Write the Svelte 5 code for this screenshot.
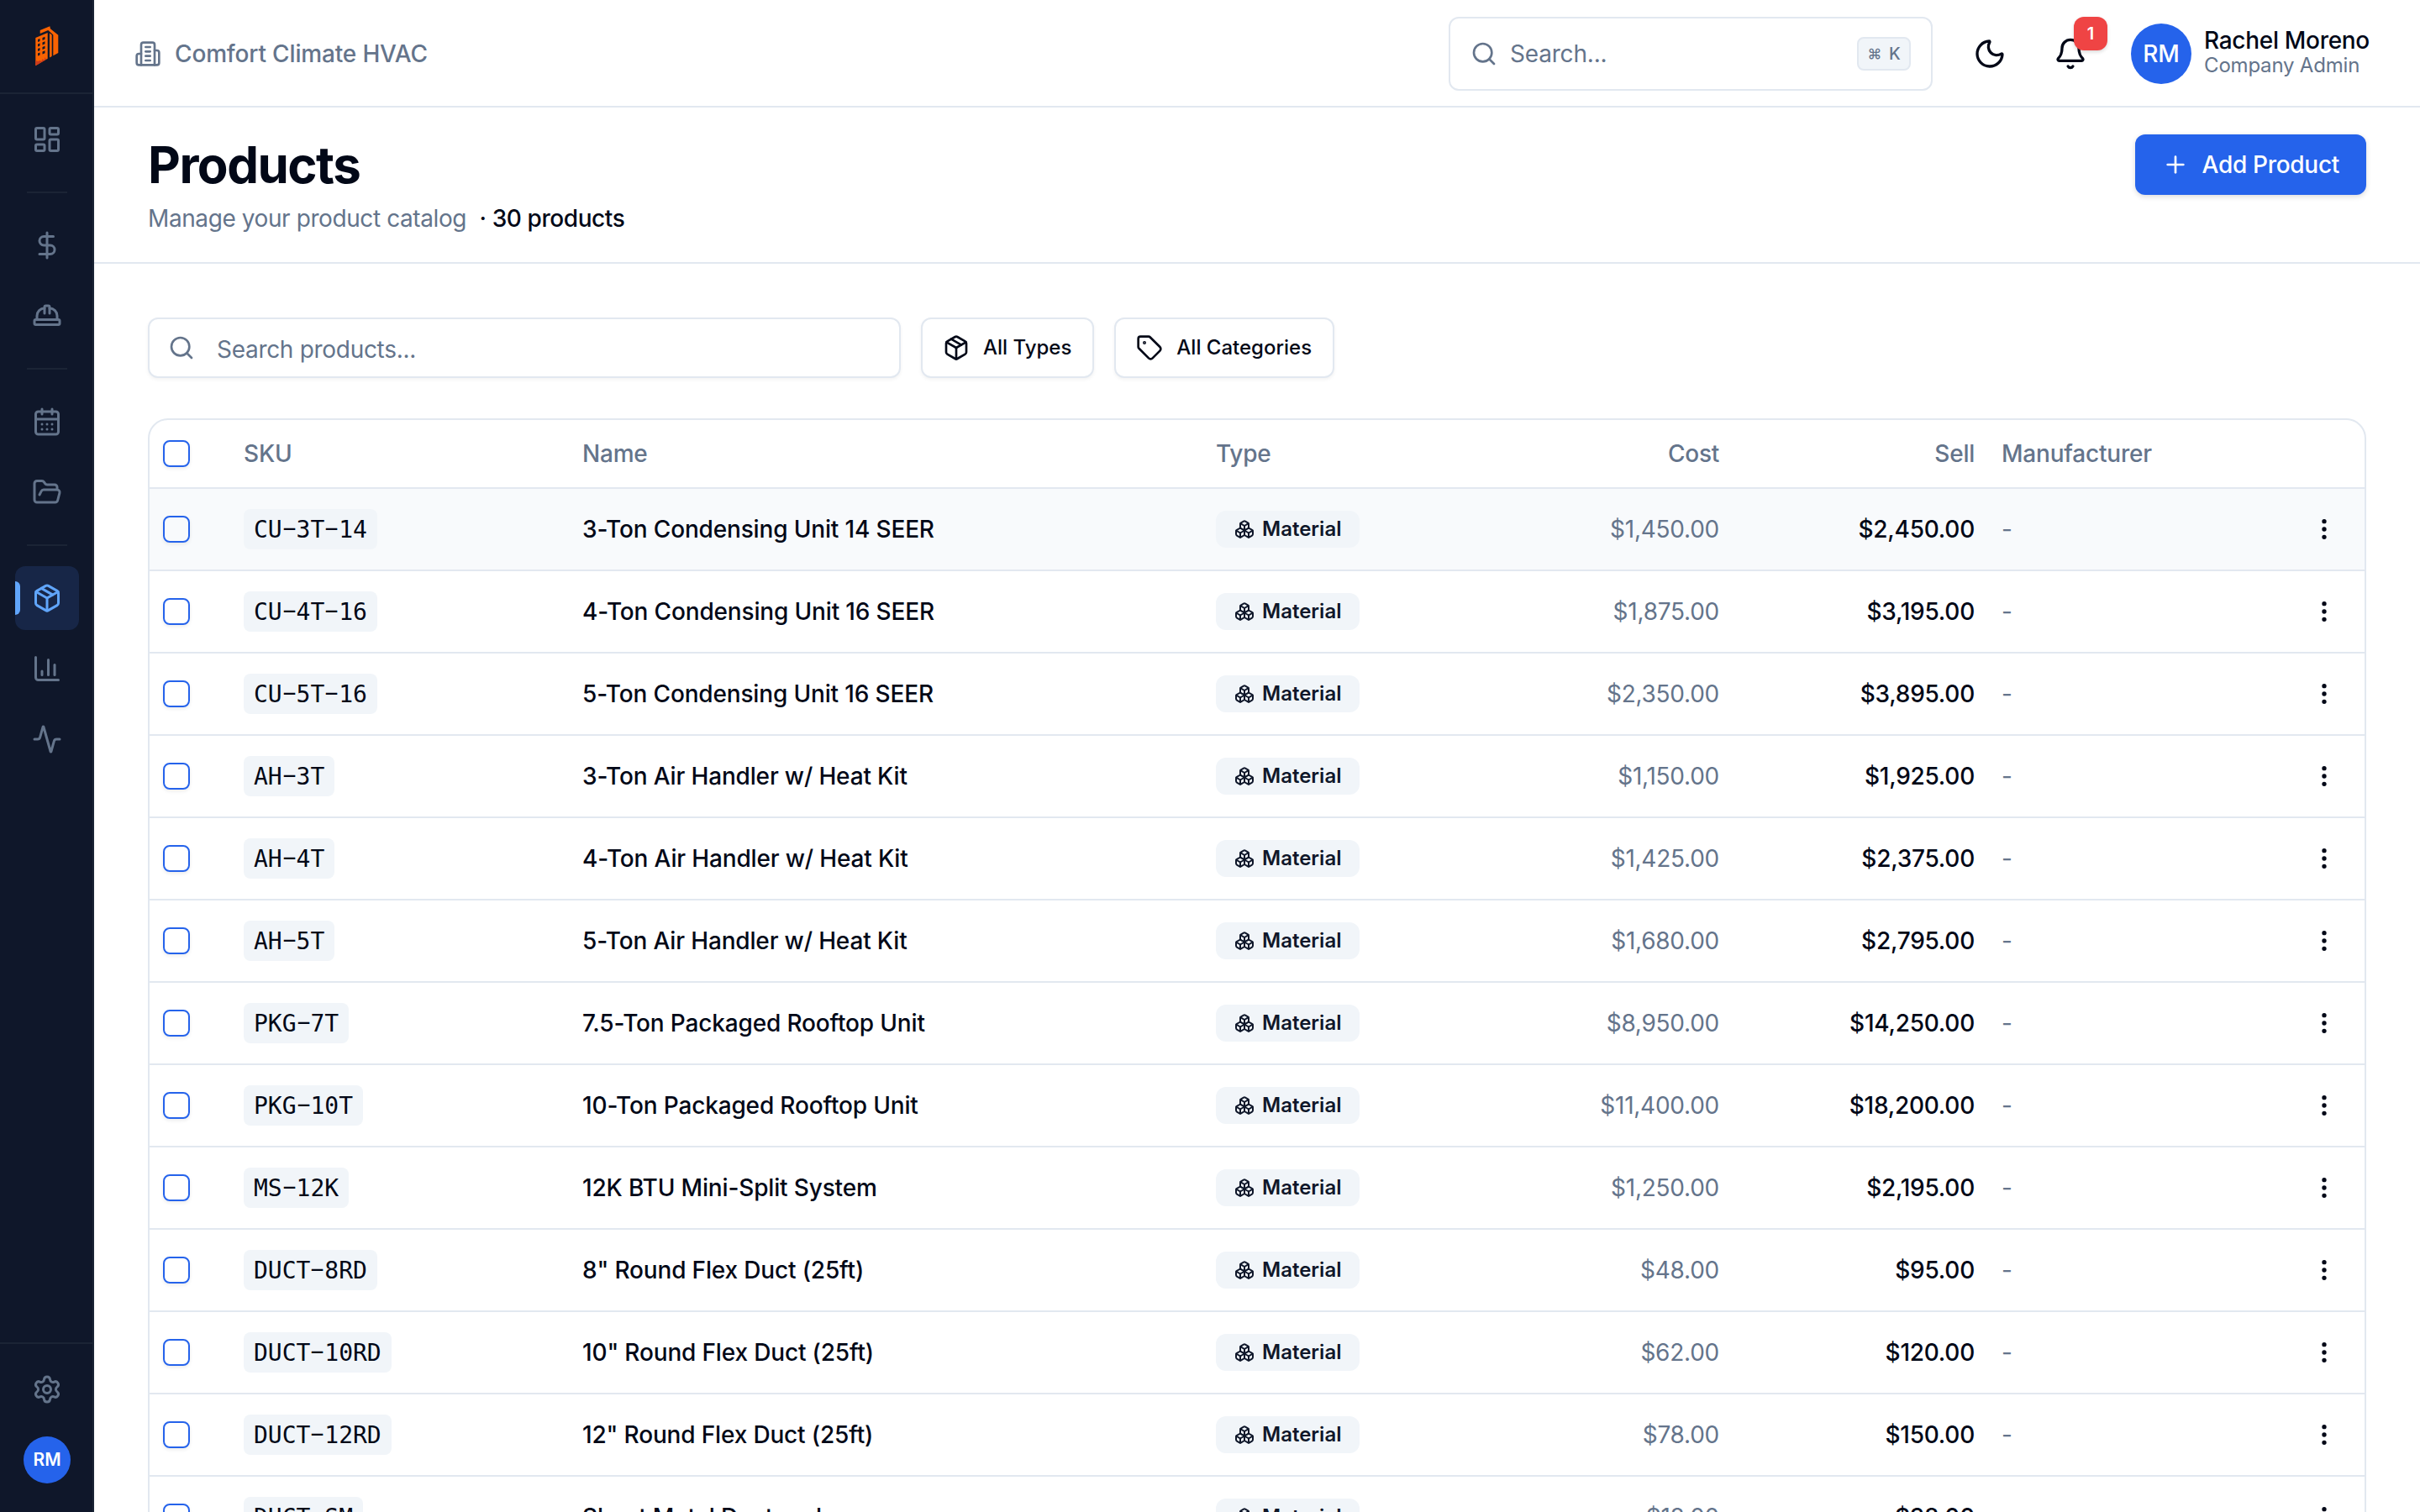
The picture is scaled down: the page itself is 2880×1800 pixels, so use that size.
<script lang="ts">
  type Product = {
    sku: string;
    name: string;
    cost: string;
    sell: string;
  };

  type IconName = keyof typeof icons;

  // 24x24 stroke icons, keyed by name
  const icons = {
    dashboard:
      '<rect width="7" height="9" x="3" y="3" rx="1"/><rect width="7" height="5" x="14" y="3" rx="1"/><rect width="7" height="9" x="14" y="12" rx="1"/><rect width="7" height="5" x="3" y="16" rx="1"/>',
    dollar:
      '<line x1="12" x2="12" y1="2" y2="22"/><path d="M17 5H9.5a3.5 3.5 0 0 0 0 7h5a3.5 3.5 0 0 1 0 7H6"/>',
    hardHat:
      '<path d="M10 10V5a1 1 0 0 1 1-1h2a1 1 0 0 1 1 1v5"/><path d="M14 6a6 6 0 0 1 6 6v3"/><path d="M4 15v-3a6 6 0 0 1 6-6"/><rect x="2" y="15" width="20" height="4" rx="1"/>',
    calendar:
      '<path d="M8 2v4"/><path d="M16 2v4"/><rect width="18" height="18" x="3" y="4" rx="2"/><path d="M3 10h18"/><path d="M8 14h.01"/><path d="M12 14h.01"/><path d="M16 14h.01"/><path d="M8 18h.01"/><path d="M12 18h.01"/><path d="M16 18h.01"/>',
    folder:
      '<path d="m6 14 1.5-2.9A2 2 0 0 1 9.24 10H20a2 2 0 0 1 1.94 2.5l-1.54 6a2 2 0 0 1-1.95 1.5H4a2 2 0 0 1-2-2V5a2 2 0 0 1 2-2h3.9a2 2 0 0 1 1.69.9l.81 1.2a2 2 0 0 0 1.67.9H18a2 2 0 0 1 2 2v2"/>',
    package:
      '<path d="M11 21.73a2 2 0 0 0 2 0l7-4A2 2 0 0 0 21 16V8a2 2 0 0 0-1-1.73l-7-4a2 2 0 0 0-2 0l-7 4A2 2 0 0 0 3 8v8a2 2 0 0 0 1 1.73z"/><path d="M12 22V12"/><path d="M3.29 7 12 12l8.71-5"/><path d="m7.5 4.27 9 5.15"/>',
    chart:
      '<path d="M3 3v16a2 2 0 0 0 2 2h16"/><path d="M13 17V5"/><path d="M18 17V9"/><path d="M8 17v-3"/>',
    activity:
      '<path d="M22 12h-2.48a2 2 0 0 0-1.93 1.46l-2.35 8.36a.25.25 0 0 1-.48 0L9.24 2.18a.25.25 0 0 0-.48 0l-2.35 8.36A2 2 0 0 1 4.49 12H2"/>',
    settings:
      '<path d="M9.671 4.136a2.34 2.34 0 0 1 4.659 0 2.34 2.34 0 0 0 3.319 1.915 2.34 2.34 0 0 1 2.33 4.033 2.34 2.34 0 0 0 0 3.831 2.34 2.34 0 0 1-2.33 4.033 2.34 2.34 0 0 0-3.319 1.915 2.34 2.34 0 0 1-4.659 0 2.34 2.34 0 0 0-3.32-1.915 2.34 2.34 0 0 1-2.33-4.033 2.34 2.34 0 0 0 0-3.831A2.34 2.34 0 0 1 6.35 6.051a2.34 2.34 0 0 0 3.319-1.915"/><circle cx="12" cy="12" r="3"/>',
    building:
      '<path d="M6 22V4a2 2 0 0 1 2-2h8a2 2 0 0 1 2 2v18Z"/><path d="M6 12H4a2 2 0 0 0-2 2v6a2 2 0 0 0 2 2h2"/><path d="M18 9h2a2 2 0 0 1 2 2v9a2 2 0 0 1-2 2h-2"/><path d="M10 6h4"/><path d="M10 10h4"/><path d="M10 14h4"/><path d="M10 18h4"/>',
    search: '<circle cx="11" cy="11" r="8"/><path d="m21 21-4.3-4.3"/>',
    moon: '<path d="M20.985 12.486a9 9 0 1 1-9.473-9.472c.405-.022.617.46.402.803a6 6 0 0 0 8.268 8.268c.344-.215.825-.004.803.401"/>',
    bell: '<path d="M10.268 21a2 2 0 0 0 3.464 0"/><path d="M3.262 15.326A1 1 0 0 0 4 17h16a1 1 0 0 0 .74-1.673C19.41 13.956 18 12.499 18 8A6 6 0 0 0 6 8c0 4.499-1.411 5.956-2.738 7.326"/>',
    plus: '<path d="M5 12h14"/><path d="M12 5v14"/>',
    tag: '<path d="M12.586 2.586A2 2 0 0 0 11.172 2H4a2 2 0 0 0-2 2v7.172a2 2 0 0 0 .586 1.414l8.704 8.704a2.426 2.426 0 0 0 3.42 0l6.58-6.58a2.426 2.426 0 0 0 0-3.42z"/><circle cx="7.5" cy="7.5" r=".5" fill="currentColor"/>',
    boxes:
      '<path d="M2.97 12.92A2 2 0 0 0 2 14.63v3.24a2 2 0 0 0 .97 1.71l3 1.8a2 2 0 0 0 2.06 0L12 19v-5.5l-5-3-4.03 2.42Z"/><path d="m7 16.5-4.74-2.85"/><path d="m7 16.5 5-3"/><path d="M7 16.5v5.17"/><path d="M12 13.5V19l3.97 2.38a2 2 0 0 0 2.06 0l3-1.8a2 2 0 0 0 .97-1.71v-3.24a2 2 0 0 0-.97-1.71L17 10.5l-5 3Z"/><path d="m17 16.5-5-3"/><path d="m17 16.5 4.74-2.85"/><path d="M17 16.5v5.17"/><path d="M7.97 4.42A2 2 0 0 0 7 6.13v4.37l5 3 5-3V6.13a2 2 0 0 0-.97-1.71l-3-1.8a2 2 0 0 0-2.06 0l-3 1.8Z"/><path d="M12 8 7.26 5.15"/><path d="m12 8 4.74-2.85"/><path d="M12 13.5V8"/>',
    more: '<circle cx="12" cy="12" r="1"/><circle cx="12" cy="5" r="1"/><circle cx="12" cy="19" r="1"/>',
  };

  const navGroups: { icon: IconName; label: string }[][] = [
    [{ icon: "dashboard", label: "Dashboard" }],
    [
      { icon: "dollar", label: "Sales" },
      { icon: "hardHat", label: "Jobs" },
    ],
    [
      { icon: "calendar", label: "Schedule" },
      { icon: "folder", label: "Projects" },
    ],
    [
      { icon: "package", label: "Products" },
      { icon: "chart", label: "Reports" },
      { icon: "activity", label: "Activity" },
    ],
  ];

  const products: Product[] = [
    { sku: "CU-3T-14", name: "3-Ton Condensing Unit 14 SEER", cost: "$1,450.00", sell: "$2,450.00" },
    { sku: "CU-4T-16", name: "4-Ton Condensing Unit 16 SEER", cost: "$1,875.00", sell: "$3,195.00" },
    { sku: "CU-5T-16", name: "5-Ton Condensing Unit 16 SEER", cost: "$2,350.00", sell: "$3,895.00" },
    { sku: "AH-3T", name: "3-Ton Air Handler w/ Heat Kit", cost: "$1,150.00", sell: "$1,925.00" },
    { sku: "AH-4T", name: "4-Ton Air Handler w/ Heat Kit", cost: "$1,425.00", sell: "$2,375.00" },
    { sku: "AH-5T", name: "5-Ton Air Handler w/ Heat Kit", cost: "$1,680.00", sell: "$2,795.00" },
    { sku: "PKG-7T", name: "7.5-Ton Packaged Rooftop Unit", cost: "$8,950.00", sell: "$14,250.00" },
    { sku: "PKG-10T", name: "10-Ton Packaged Rooftop Unit", cost: "$11,400.00", sell: "$18,200.00" },
    { sku: "MS-12K", name: "12K BTU Mini-Split System", cost: "$1,250.00", sell: "$2,195.00" },
    { sku: "DUCT-8RD", name: '8" Round Flex Duct (25ft)', cost: "$48.00", sell: "$95.00" },
    { sku: "DUCT-10RD", name: '10" Round Flex Duct (25ft)', cost: "$62.00", sell: "$120.00" },
    { sku: "DUCT-12RD", name: '12" Round Flex Duct (25ft)', cost: "$78.00", sell: "$150.00" },
    { sku: "DUCT-SM", name: "Sheet Metal Ductwork", cost: "$18.00", sell: "$38.00" },
  ];

  let activeNav = $state("Products");
  let highlighted = $state("CU-3T-14");
</script>

{#snippet icon(name: IconName, size: number, stroke = 2)}
  <svg
    class="icon"
    width={size}
    height={size}
    viewBox="0 0 24 24"
    fill="none"
    stroke="currentColor"
    stroke-width={stroke}
    stroke-linecap="round"
    stroke-linejoin="round"
    aria-hidden="true"
  >
    {@html icons[name]}
  </svg>
{/snippet}

<div class="app">
  <aside class="sidebar">
    <div class="brand">
      <svg width="28" height="48" viewBox="0 0 28 48" aria-hidden="true">
        <path fill="#f96302" d="M.3 14 14.700 8v30.700L.3 47.300Z" />
        <path fill="#f96302" d="M5.700 5 17.300.3l.7 3 9.300 7.400V32l-6 3.300V10.500L15.300 5 5.700 9Z" />
        <path fill="#f96302" d="M17 8.500l2.700 2V36L17 37.500Z" />
        <path fill="#cb3a1c" d="M.3 41l3 1 2-1 2 1 1.500-3 1.500 2 1.500-4 1 3 1.900-1v-.3L.3 47.300Z" />
        <path
          fill="#0f172a"
          d="M3 16l2.500-1v3L3 19ZM8.500 14l3-1.200v3l-3 1.200ZM3 21.500l2.500-1v3l-2.500 1ZM8.500 19.500l3-1.200v3l-3 1.200ZM3 27l2.500-1v3L3 30ZM8.500 25l3-1.200v3l-3 1.200ZM3 32.500l2.500-1v3l-2.500 1ZM8.500 30.500l3-1.200v3l-3 1.200Z"
        />
      </svg>
    </div>
    <nav class="nav">
      {#each navGroups as group, i}
        {#if i > 0}
          <div class="divider"></div>
        {/if}
        <div class="nav-group">
          {#each group as item}
            <button
              class="nav-item"
              class:active={activeNav === item.label}
              aria-label={item.label}
              onclick={() => (activeNav = item.label)}
            >
              {@render icon(item.icon, 36)}
            </button>
          {/each}
        </div>
      {/each}
    </nav>
    <div class="sidebar-footer">
      <button class="nav-item" aria-label="Settings">
        {@render icon("settings", 36)}
      </button>
      <div class="avatar small">RM</div>
    </div>
  </aside>

  <div class="content">
    <header class="topbar">
      <div class="company">
        {@render icon("building", 32)}
        <span>Comfort Climate HVAC</span>
      </div>
      <div class="topbar-right">
        <div class="global-search">
          {@render icon("search", 32)}
          <span>Search...</span>
          <kbd><span class="cmd">⌘</span>K</kbd>
        </div>
        <button class="icon-button" aria-label="Toggle theme">
          {@render icon("moon", 40)}
        </button>
        <button class="icon-button" aria-label="Notifications">
          {@render icon("bell", 40)}
          <span class="count">1</span>
        </button>
        <div class="user">
          <div class="avatar">RM</div>
          <div class="user-text">
            <div class="user-name">Rachel Moreno</div>
            <div class="user-role">Company Admin</div>
          </div>
        </div>
      </div>
    </header>

    <section class="page-header">
      <div>
        <h1>Products</h1>
        <p>Manage your product catalog <span class="total">· 30 products</span></p>
      </div>
      <button class="primary">
        {@render icon("plus", 32)}
        Add Product
      </button>
    </section>

    <main>
      <div class="filters">
        <div class="search-field">
          {@render icon("search", 32)}
          <input type="text" placeholder="Search products..." />
        </div>
        <button class="filter">
          {@render icon("package", 32)}
          All Types
        </button>
        <button class="filter">
          {@render icon("tag", 32)}
          All Categories
        </button>
      </div>

      <div class="table-card">
        <table>
          <colgroup>
            <col class="col-check" />
            <col class="col-sku" />
            <col class="col-name" />
            <col class="col-type" />
            <col class="col-price" />
            <col class="col-price" />
            <col />
            <col class="col-actions" />
          </colgroup>
          <thead>
            <tr>
              <th><span class="checkbox"></span></th>
              <th>SKU</th>
              <th>Name</th>
              <th>Type</th>
              <th class="right">Cost</th>
              <th class="right">Sell</th>
              <th>Manufacturer</th>
              <th></th>
            </tr>
          </thead>
          <tbody>
            {#each products as product}
              <tr class:highlighted={highlighted === product.sku}>
                <td><span class="checkbox"></span></td>
                <td>
                  <code
                    >{#each product.sku.split("-") as part, i}{#if i > 0}<span class="dash">-</span
                        >{/if}{part}{/each}</code
                  >
                </td>
                <td class="name">{product.name}</td>
                <td>
                  <span class="badge">
                    {@render icon("boxes", 24)}
                    Material
                  </span>
                </td>
                <td class="right muted">{product.cost}</td>
                <td class="right sell">{product.sell}</td>
                <td class="muted">-</td>
                <td class="actions">{@render icon("more", 32)}</td>
              </tr>
            {/each}
          </tbody>
        </table>
      </div>
    </main>
  </div>
</div>

<style>
  :global(body) {
    overflow: hidden;
  }

  .app {
    --text: #020817;
    --muted: #64748b;
    --border: #e2e8f0;
    --surface: #f1f5f9;
    --primary: #2563eb;
    display: flex;
    height: 100vh;
    overflow: hidden;
    background: #fff;
    color: var(--text);
    font-family: Inter, "Liberation Sans", sans-serif;
    font-size: 28px;
    line-height: 40px;
  }

  .app :global(*) {
    box-sizing: border-box;
  }

  button {
    border: 0;
    padding: 0;
    background: none;
    color: inherit;
    font: inherit;
  }

  .icon {
    display: block;
    flex-shrink: 0;
  }

  .sidebar {
    display: flex;
    flex-direction: column;
    flex-shrink: 0;
    width: 112px;
    border-right: 2px solid #1b2435;
    background: #0f172a;
    color: var(--muted);
  }

  .brand {
    display: flex;
    align-items: center;
    justify-content: center;
    height: 112px;
    padding-left: 2px;
    border-bottom: 2px solid #1b2435;
  }

  .nav {
    flex: 1;
    padding: 16px 16px 0 18px;
  }

  .nav-group {
    display: flex;
    flex-direction: column;
    gap: 8px;
  }

  .nav-item {
    position: relative;
    display: flex;
    align-items: center;
    justify-content: center;
    width: 76px;
    height: 76px;
    border-radius: 12px;
  }

  .nav-item.active {
    overflow: hidden;
    background: #172647;
    color: #60a5fa;
  }

  .nav-item.active::before {
    content: "";
    position: absolute;
    left: 0;
    top: 18px;
    width: 6px;
    height: 40px;
    border-radius: 0 6px 6px 0;
    background: #60a5fa;
  }

  .divider {
    width: 48px;
    height: 2px;
    margin: 24px 14px;
    background: #1b2435;
  }

  .sidebar-footer {
    display: flex;
    flex-direction: column;
    align-items: center;
    gap: 18px;
    padding: 16px 0 34px 2px;
    border-top: 2px solid #1b2435;
  }

  .avatar {
    display: flex;
    align-items: center;
    justify-content: center;
    width: 72px;
    height: 72px;
    border-radius: 50%;
    background: var(--primary);
    color: #fff;
    font-weight: 500;
  }

  .avatar.small {
    width: 56px;
    height: 56px;
    font-size: 21px;
    font-weight: 600;
  }

  .content {
    flex: 1;
    min-width: 0;
  }

  .topbar {
    display: flex;
    align-items: center;
    justify-content: space-between;
    height: 128px;
    padding: 2px 60px 0 48px;
    border-bottom: 2px solid var(--border);
  }

  .company {
    display: flex;
    align-items: center;
    gap: 16px;
    color: var(--muted);
    font-weight: 500;
    letter-spacing: -0.16px;
  }

  .topbar-right {
    display: flex;
    align-items: center;
  }

  .global-search {
    display: flex;
    align-items: center;
    gap: 15px;
    width: 576px;
    height: 88px;
    margin-right: 32px;
    padding: 0 24px;
    border: 2px solid var(--border);
    border-radius: 12px;
    color: var(--muted);
    letter-spacing: -0.2px;
  }

  kbd {
    display: flex;
    align-items: center;
    justify-content: center;
    gap: 9px;
    width: 64px;
    height: 40px;
    margin-left: auto;
    border: 2px solid var(--border);
    border-radius: 8px;
    background: var(--surface);
    font-family: inherit;
    font-size: 20px;
    font-weight: 500;
  }

  .cmd {
    font-size: 17px;
  }

  .icon-button {
    position: relative;
    display: flex;
    align-items: center;
    justify-content: center;
    width: 72px;
    height: 72px;
    margin-right: 24px;
  }

  .icon-button + .icon-button {
    margin-right: 36px;
  }

  .count {
    position: absolute;
    top: -8px;
    right: -8px;
    width: 40px;
    height: 40px;
    border-radius: 12px;
    background: #ef4444;
    box-shadow: 0 2px 4px rgb(0 0 0 / 0.15);
    color: #fff;
    font-size: 20px;
    font-weight: 600;
    text-align: center;
  }

  .user {
    display: flex;
    align-items: center;
    gap: 15px;
  }

  .user-name {
    font-weight: 500;
    letter-spacing: -0.3px;
    line-height: 28px;
  }

  .user-role {
    color: var(--muted);
    font-size: 24px;
    letter-spacing: -0.2px;
    line-height: 32px;
  }

  .page-header {
    display: flex;
    align-items: flex-start;
    justify-content: space-between;
    height: 186px;
    padding: 32px 64px 0;
    border-bottom: 2px solid var(--border);
  }

  h1 {
    margin: 0;
    font-size: 60px;
    font-weight: 700;
    letter-spacing: -0.025em;
    line-height: 72px;
  }

  p {
    margin: 8px 0 0;
    color: var(--muted);
    letter-spacing: -0.41px;
  }

  .total {
    margin-left: 8px;
    color: var(--text);
    font-weight: 500;
  }

  .primary {
    display: flex;
    align-items: center;
    gap: 16px;
    height: 72px;
    padding: 0 32px;
    border-radius: 12px;
    background: var(--primary);
    box-shadow: 0 2px 6px rgb(0 0 0 / 0.15);
    color: #fff;
    font-weight: 500;
    letter-spacing: -0.3px;
  }

  main {
    padding: 64px 64px 0;
  }

  .filters {
    display: flex;
    gap: 24px;
    margin-bottom: 48px;
  }

  .search-field,
  .filter {
    display: flex;
    align-items: center;
    height: 72px;
    border: 2px solid var(--border);
    border-radius: 12px;
    background: #fff;
    box-shadow: 0 2px 4px rgb(0 0 0 / 0.05);
  }

  .search-field {
    gap: 26px;
    width: 896px;
    padding: 0 22px;
    color: var(--muted);
  }

  input {
    flex: 1;
    height: 40px;
    padding: 4px 0 0;
    border: 0;
    outline: 0;
    background: none;
    font: inherit;
    letter-spacing: -0.3px;
  }

  input::placeholder {
    color: var(--muted);
    opacity: 1;
  }

  .filter {
    gap: 16px;
    padding: 0 25px 0 24px;
    font-size: 24px;
    font-weight: 500;
  }

  .table-card {
    overflow: hidden;
    border: 2px solid var(--border);
    border-radius: 24px;
  }

  table {
    width: 100%;
    border-collapse: separate;
    border-spacing: 0;
    table-layout: fixed;
  }

  .col-check,
  .col-actions {
    width: 96px;
  }

  .col-sku {
    width: 403px;
  }

  .col-name {
    width: 754px;
  }

  .col-type {
    width: 327px;
  }

  .col-price {
    width: 304px;
  }

  th,
  td {
    padding: 0 16px;
    border-bottom: 2px solid var(--border);
    text-align: left;
    vertical-align: middle;
    white-space: nowrap;
  }

  th {
    height: 82px;
    color: var(--muted);
    font-weight: 500;
    letter-spacing: -0.2px;
  }

  td {
    height: 98px;
  }

  .highlighted {
    background: #f8fafc;
  }

  .right {
    text-align: right;
    letter-spacing: -0.25px;
  }

  .muted {
    color: var(--muted);
  }

  .name,
  .sell {
    font-weight: 500;
  }

  .name {
    letter-spacing: -0.16px;
  }

  .checkbox {
    display: block;
    width: 32px;
    height: 32px;
    border: 2px solid var(--primary);
    border-radius: 8px;
    box-shadow: 0 2px 4px rgb(0 0 0 / 0.08);
  }

  code {
    display: inline-block;
    height: 48px;
    padding: 5px 12px 3px;
    border-radius: 8px;
    background: var(--surface);
    font-family: "DejaVu Sans Mono", monospace;
    font-size: 28px;
    vertical-align: middle;
  }

  /* widen the short monospace hyphen so the SKU segments read clearly */
  .dash {
    display: inline-block;
    transform: translateY(-2px) scaleX(1.9);
  }

  .badge {
    display: inline-flex;
    align-items: center;
    gap: 9px;
    height: 44px;
    padding: 0 22px;
    border-radius: 12px;
    background: var(--surface);
    color: #0f172a;
    font-size: 24px;
    font-weight: 600;
    vertical-align: middle;
  }

  .actions {
    padding: 0 32px;
  }
</style>
